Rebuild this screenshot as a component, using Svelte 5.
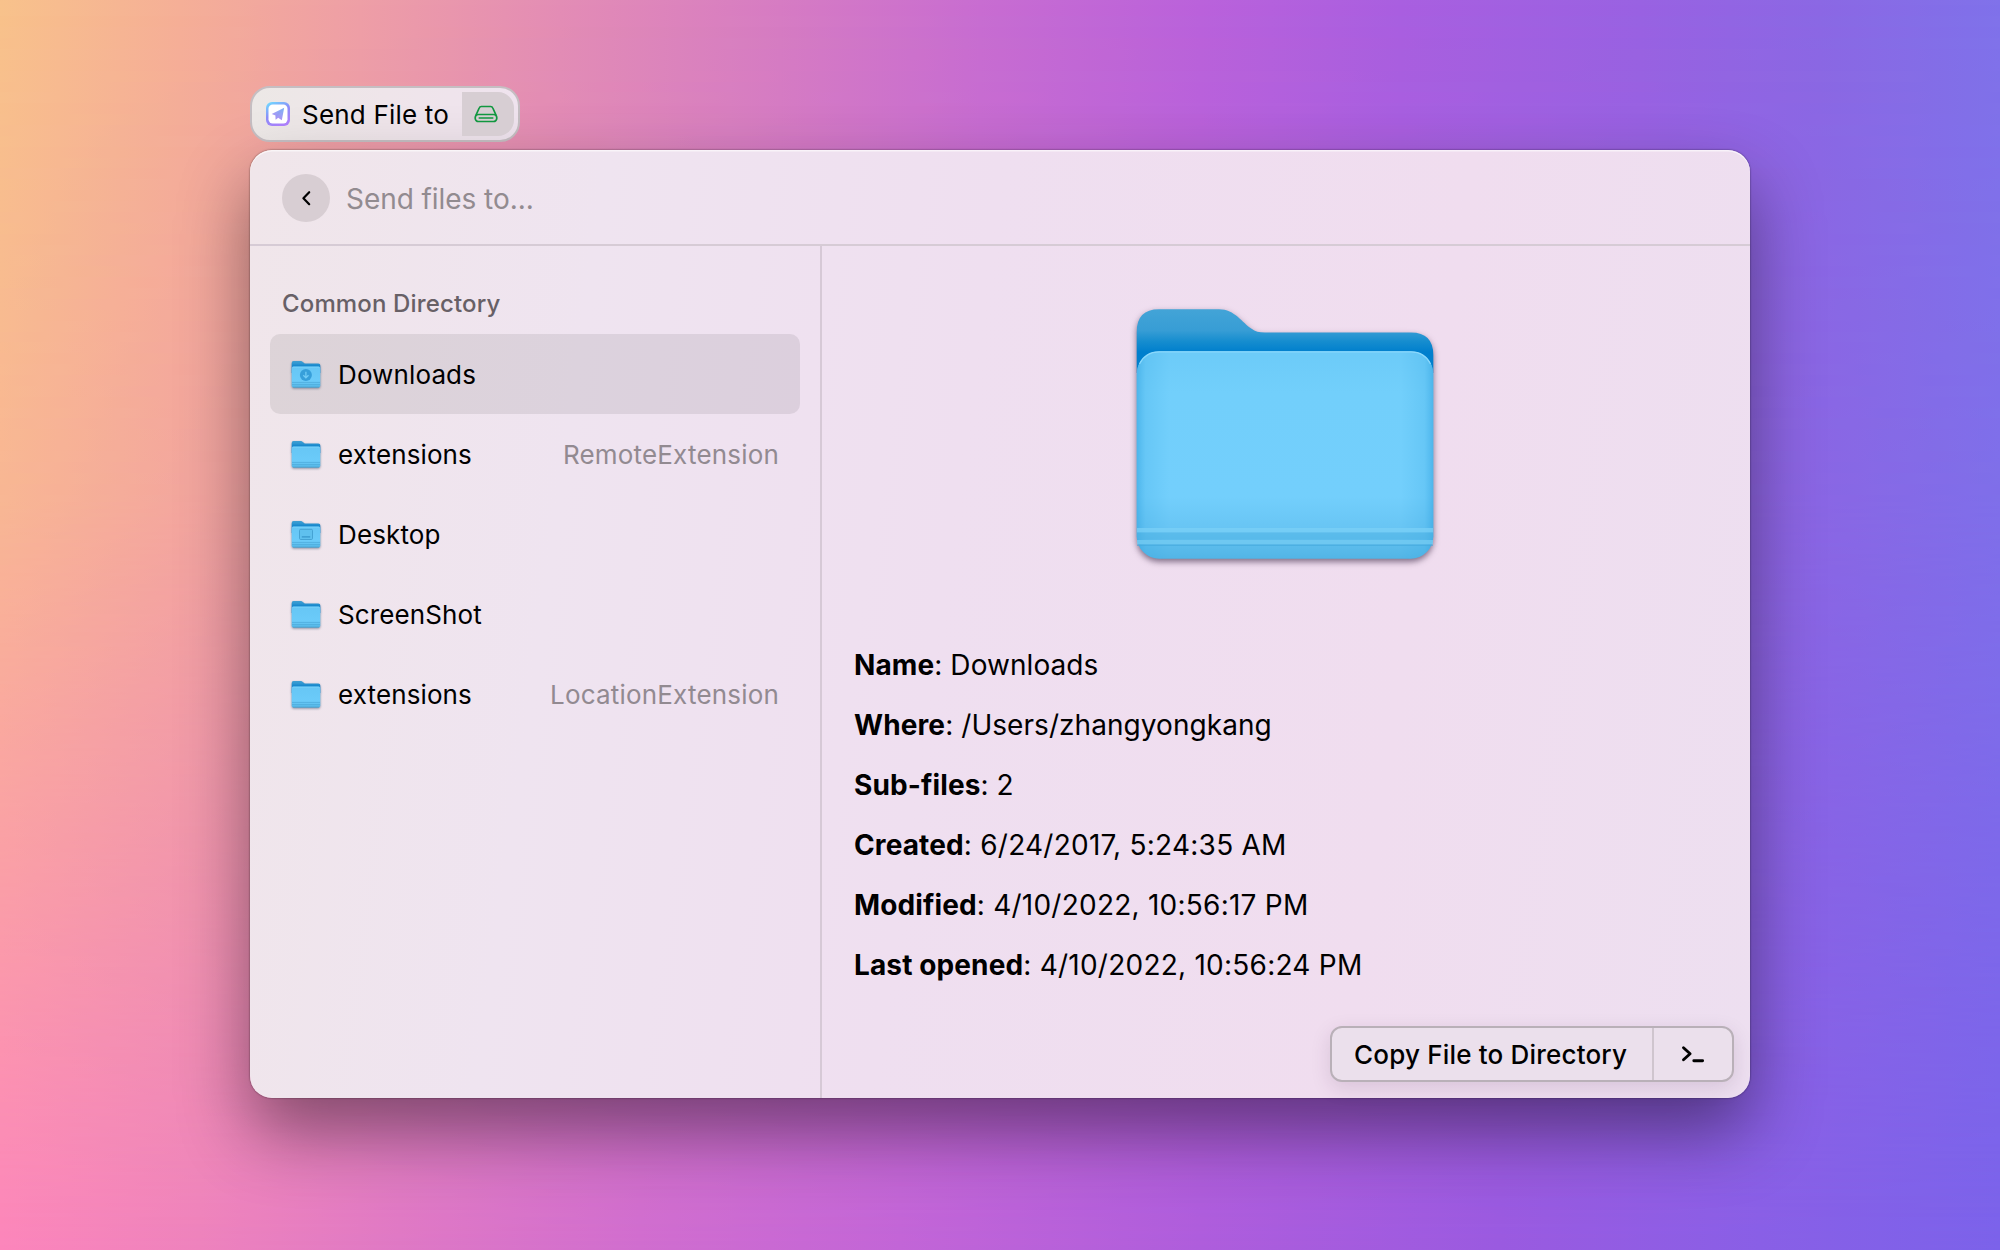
<script>
  const directories = [
    { name: 'Downloads', glyph: 'download', selected: true },
    { name: 'extensions', accessory: 'RemoteExtension' },
    { name: 'Desktop', glyph: 'desktop' },
    { name: 'ScreenShot' },
    { name: 'extensions', accessory: 'LocationExtension' }
  ];

  const details = [
    { label: 'Name', value: 'Downloads' },
    { label: 'Where', value: '/Users/zhangyongkang' },
    { label: 'Sub-files', value: '2' },
    { label: 'Created', value: '6/24/2017, 5:24:35 AM', date: true },
    { label: 'Modified', value: '4/10/2022, 10:56:17 PM', date: true },
    { label: 'Last opened', value: '4/10/2022, 10:56:24 PM', date: true }
  ];
</script>

{#snippet smallFolder(glyph)}
  <svg class="folder-small" width="32" height="32" viewBox="0 0 32 32">
    <path d="M1.700 5Q1.700 3.100 3.600 3.100h7.200q1.200 0 2 .8l1.300 1q.6.5 1.400.5H28.300q2 0 2 2V15H1.700z" fill="url(#small-back)" />
    <rect x="1.700" y="8.600" width="28.600" height="20.900" rx="1.800" fill="url(#small-front)" />
    <path d="M2.600 9.100h26.800" stroke="#83d5fb" stroke-width=".7" />
    <path d="M2 24.400h28M2 26.600h28" stroke="#4aa8d8" stroke-width=".7" />
    <path d="M2.800 29.200h26.400" stroke="#4293c0" stroke-width=".6" />
    {#if glyph === 'download'}
      <circle cx="15.900" cy="16.900" r="6" fill="#379fda" />
      <path d="M15.900 13.700v6M13.300 17.300l2.600 2.600 2.600-2.600" fill="none" stroke="#72cbf6" stroke-width="1.300" />
    {:else if glyph === 'desktop'}
      <rect x="9.500" y="11.300" width="13" height="10.200" rx="1.200" fill="#5fc0ee" stroke="#429fd0" stroke-width=".9" />
      <path d="M11.800 18.900h8.400" stroke="#3290c6" stroke-width="1.100" />
    {/if}
  </svg>
{/snippet}

<div class="desktop">
  <svg class="defs" width="0" height="0" aria-hidden="true">
    <defs>
      <linearGradient id="small-back" x1="0" y1="3" x2="0" y2="9" gradientUnits="userSpaceOnUse">
        <stop offset="0" stop-color="#3f9fd2" />
        <stop offset=".4" stop-color="#3097d1" />
        <stop offset="1" stop-color="#0a7fc8" />
      </linearGradient>
      <linearGradient id="small-front" x1="0" y1="0" x2="0" y2="1">
        <stop offset="0" stop-color="#66c6f5" />
        <stop offset=".7" stop-color="#6bcbf9" />
        <stop offset="1" stop-color="#55b7e7" />
      </linearGradient>
    </defs>
  </svg>

  <div class="pill">
    <svg class="app-icon" width="24" height="24" viewBox="0 0 24 24">
      <defs>
        <linearGradient id="ring" x1=".1" y1="0" x2=".6" y2="1">
          <stop offset="0" stop-color="#6fdcff" />
          <stop offset=".5" stop-color="#8c8cf8" />
          <stop offset="1" stop-color="#ac80fa" />
        </linearGradient>
        <linearGradient id="plane" x1=".8" y1="0" x2=".3" y2="1">
          <stop offset="0" stop-color="#7fb4f4" />
          <stop offset="1" stop-color="#b58cf6" />
        </linearGradient>
      </defs>
      <rect width="24" height="24" rx="6" fill="url(#ring)" />
      <rect x="2.500" y="2.500" width="19" height="19" rx="4.200" fill="#fff" />
      <path d="M18.200 5.800L5.700 11.900l3.800 1.600.2 4.300 2.500-2.100 3.600 2.500z" fill="url(#plane)" />
      <path d="M18.200 5.800l-8.700 7.700.2 4.300 1.300-3.300z" fill="#8a9bf2" opacity=".4" />
    </svg>
    <span class="pill-text">Send File to</span>
    <span class="pill-target">
      <svg width="24" height="18" viewBox="0 0 24 18" fill="none" stroke="#10973f" stroke-width="1.700" stroke-linejoin="round" stroke-linecap="round">
        <path d="M2 10.200L5.200 3Q5.800 1.500 7.400 1.500h9.200q1.600 0 2.200 1.500L22 10.200" />
        <rect x="1.200" y="9.500" width="21.600" height="7" rx="3.300" />
        <path d="M5.200 13h13.600" stroke-width="1.500" />
      </svg>
    </span>
  </div>

  <main class="window">
    <header>
      <button class="back" aria-label="Back">
        <svg width="10" height="16" viewBox="0 0 10 16" fill="none" stroke="#000" stroke-width="2.200">
          <path d="M8.200 2.200L2.400 8.200l5.800 6" stroke-linecap="round" stroke-linejoin="round" />
        </svg>
      </button>
      <span class="search">Send files to...</span>
    </header>

    <div class="content">
      <aside>
        <h2>Common Directory</h2>
        <ul>
          {#each directories as dir}
            <li class:selected={dir.selected}>
              {@render smallFolder(dir.glyph)}
              <span class="name">{dir.name}</span>
              {#if dir.accessory}<span class="accessory">{dir.accessory}</span>{/if}
            </li>
          {/each}
        </ul>
      </aside>

      <section>
        <svg class="folder" width="320" height="280" viewBox="0 0 320 280">
          <defs>
            <linearGradient id="back" x1="0" y1="11" x2="0" y2="54" gradientUnits="userSpaceOnUse">
              <stop offset="0" stop-color="#43a4d7" />
              <stop offset=".5" stop-color="#379dd5" />
              <stop offset=".75" stop-color="#168dcf" />
              <stop offset="1" stop-color="#007fcd" />
            </linearGradient>
            <linearGradient id="front" x1="0" y1="0" x2="0" y2="1">
              <stop offset="0" stop-color="#6ccbf8" />
              <stop offset=".2" stop-color="#72cffb" />
              <stop offset=".7" stop-color="#73cffc" />
              <stop offset=".85" stop-color="#68c5f4" />
              <stop offset="1" stop-color="#52b5e6" />
            </linearGradient>
            <linearGradient id="edge" x1="0" y1="0" x2="1" y2="0">
              <stop offset="0" stop-color="#269bdb" stop-opacity=".5" />
              <stop offset=".03" stop-color="#35a7e2" stop-opacity=".2" />
              <stop offset=".11" stop-color="#35a7e2" stop-opacity="0" />
              <stop offset=".89" stop-color="#35a7e2" stop-opacity="0" />
              <stop offset=".97" stop-color="#35a7e2" stop-opacity=".2" />
              <stop offset="1" stop-color="#269bdb" stop-opacity=".5" />
            </linearGradient>
          </defs>
          <g class="folder-body">
            <path d="M11.700 70V34Q11.700 11.300 34 11.300H94C110 11.300 117 25 127 31Q131 34.500 140 34.500H286Q308.300 34.500 308.300 57V75H11.700z" fill="url(#back)" />
            <rect x="11.700" y="53.300" width="296.600" height="207.400" rx="22.500" fill="url(#front)" />
          </g>
          <rect x="11.700" y="53.300" width="296.600" height="207.400" rx="22.500" fill="url(#edge)" />
          <path d="M14.500 66Q20 54 34 53.900H286Q300 54 305.500 66" fill="none" stroke="#8ad8fc" stroke-width="1.200" />
          <rect x="12" y="230" width="296" height="4.500" fill="#7bd0f7" opacity=".75" />
          <rect x="12" y="234.500" width="296" height="7" fill="#50b3e4" opacity=".45" />
          <rect x="12" y="242" width="296" height="4.500" fill="#73caf1" opacity=".8" />
          <rect x="12" y="246.500" width="296" height="1.500" fill="#43a9dc" opacity=".6" />
        </svg>

        <dl>
          {#each details as item}
            <div><dt>{item.label}</dt><dd class:date={item.date}>: {item.value}</dd></div>
          {/each}
        </dl>

        <div class="actions">
          <span class="primary">Copy File to Directory</span>
          <span class="more">
            <svg width="24" height="18" viewBox="0 0 24 18" fill="none" stroke="#000" stroke-width="2.900" stroke-linecap="round" stroke-linejoin="round">
              <path d="M2.500 2.700l6.600 6L2.500 14.700M12.800 15.700h8.800" />
            </svg>
          </span>
        </div>
      </section>
    </div>
  </main>
</div>

<style>
  :global(body) { margin: 0; }

  .desktop {
    position: relative;
    isolation: isolate;
    box-sizing: border-box;
    width: 2000px;
    height: 1250px;
    padding: 86px 250px 0;
    overflow: hidden;
    font-family: Inter, 'Liberation Sans', sans-serif;
    color: #000;
    background: linear-gradient(90deg, #f8c28b 0%, #f5af97 9%, #ee9fa6 18%, #e38db5 28%, #d67cc3 39%, #c86dd1 49%, #ba62db 60%, #a95fe0 70%, #9962e2 82%, #8b68e4 91%, #8072ea 100%);
  }
  /* lower half of the wallpaper, faded in over the upper one */
  .desktop::before {
    content: '';
    position: absolute;
    inset: 0;
    z-index: -1;
    background: linear-gradient(90deg, #fc85bb 0%, #ee82bd 10%, #df78c5 20%, #d06dcf 32%, #c265d7 45%, #ae5ddc 60%, #9a5ae0 75%, #895fe6 88%, #7b62ea 100%);
    mask-image: linear-gradient(180deg, transparent 0%, rgba(0, 0, 0, .18) 40%, rgba(0, 0, 0, .55) 68%, #000 100%);
  }
  .defs { display: block; position: absolute; }

  .pill {
    box-sizing: border-box;
    display: flex;
    align-items: center;
    width: 270px;
    height: 56px;
    padding: 4px 4px 4px 14px;
    border: 2px solid #c5bec2;
    border-radius: 20px;
    background: linear-gradient(90deg, #ece8e6, #efe5ea 50%, #efe3ee);
  }
  .app-icon { flex: none; }
  .pill-text { flex: 1; margin-left: 12px; padding-top: 2px; font-size: 26px; line-height: 32px; letter-spacing: .2px; white-space: nowrap; }
  .pill-target {
    display: flex;
    align-items: center;
    justify-content: center;
    width: 52px;
    height: 44px;
    padding-right: 4px;
    box-sizing: border-box;
    border-radius: 0 16px 16px 0;
    background: #d7ced3;
  }

  .window {
    display: flex;
    flex-direction: column;
    height: 948px;
    margin-top: 8px;
    border-radius: 22px;
    background: linear-gradient(98deg, #f0e6ea 0%, #efe4f0 22%, #efdff0 46%, #f0ddef 75%, #eddff0 100%);
    box-shadow: 0 0 2px rgba(0, 0, 0, .6), 0 34px 70px rgba(0, 0, 0, .43), inset 0 1.500px 0 rgba(255, 255, 255, .6);
  }
  header {
    display: flex;
    align-items: center;
    height: 94px;
    padding-left: 32px;
    border-bottom: 2px solid #d6cbd5;
  }
  .back {
    display: flex;
    align-items: center;
    justify-content: center;
    width: 48px;
    height: 48px;
    margin-top: 2px;
    padding: 0;
    border: 0;
    border-radius: 50%;
    background: #d8ced3;
  }
  .search { margin-left: 16px; padding-top: 4px; font-size: 28px; line-height: 34px; letter-spacing: -.06px; color: #928b90; }

  .content { display: flex; flex: 1; }
  aside {
    box-sizing: border-box;
    width: 572px;
    padding: 43px 20px 0;
    border-right: 2px solid #d6c9d6;
  }
  h2 { margin: 0 0 15px 12px; font-size: 24px; font-weight: 500; line-height: 30px; letter-spacing: .15px; color: #676066; }
  ul { margin: 0; padding: 0; list-style: none; }
  li {
    display: flex;
    align-items: center;
    height: 80px;
    padding: 0 21px 0 20px;
    border-radius: 10px;
    font-size: 26px;
    letter-spacing: .12px;
  }
  .selected { background: rgba(0, 0, 0, .078); }
  .folder-small { flex: none; filter: drop-shadow(0 1px 1px rgba(50, 60, 90, .5)); }
  .name { margin-left: 16px; }
  .accessory { margin-left: auto; letter-spacing: .18px; color: #928a91; }

  section { display: flex; flex: 1; flex-direction: column; }
  .folder { align-self: center; margin: 52px 2px 0 0; }
  .folder-body { filter: drop-shadow(0 3px 3px rgba(50, 30, 60, .6)); }
  dl { margin: 57px 0 0 32px; font-size: 28px; }
  dl div { display: flex; height: 60px; line-height: 60px; white-space: pre; }
  dt { font-weight: 700; letter-spacing: .12px; }
  dd { margin: 0; letter-spacing: .06px; }
  .date { letter-spacing: .24px; }

  .actions {
    box-sizing: border-box;
    display: flex;
    align-self: flex-end;
    width: 404px;
    height: 56px;
    margin: auto 16px 16px 0;
    border: 2px solid #b9b0b8;
    border-radius: 12px;
    background: #ebe0ec;
    box-shadow: 0 6px 20px rgba(60, 20, 70, .13);
  }
  .primary {
    flex: 1;
    border-right: 2px solid #cfc5ce;
    padding-left: 22px;
    font-size: 26px;
    font-weight: 500;
    line-height: 54px;
    height: 52px;
    letter-spacing: .19px;
    white-space: nowrap;
  }
  .more { display: flex; align-items: center; justify-content: center; width: 78px; }
</style>
